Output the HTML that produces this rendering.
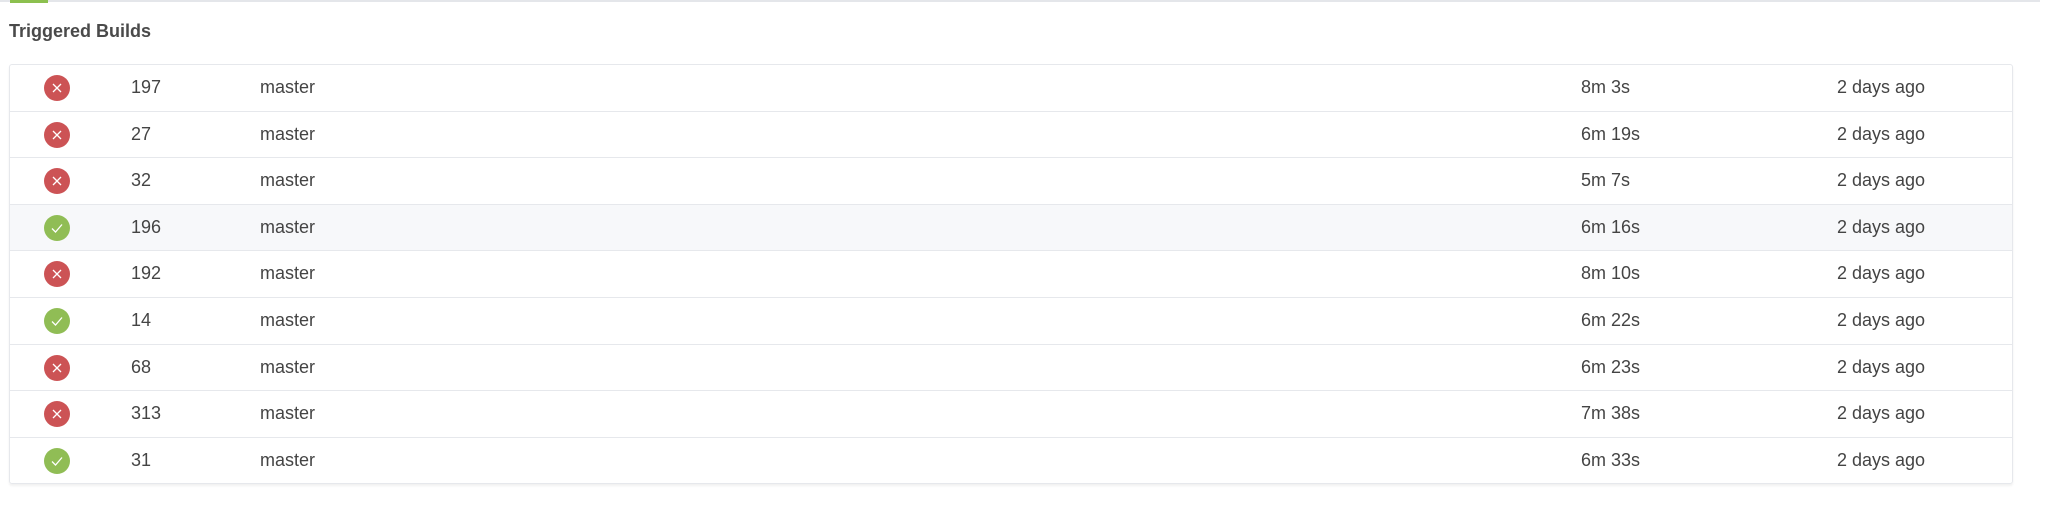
<!DOCTYPE html>
<html><head><style>
body{margin:0;width:2048px;height:506px;background:#fff;font-family:"Liberation Sans",sans-serif;position:relative;overflow:hidden}
.topline{position:absolute;left:0;top:0;width:2040px;height:2px;background:#e4e6ea}
.green{position:absolute;left:10px;top:0;width:38px;height:3px;background:#8cc04f}
h1{position:absolute;left:9px;top:21px;margin:0;font-size:18px;font-weight:bold;color:#4a4a4a}
.tbl{position:absolute;left:9px;top:64px;width:2002px;border:1px solid #e6e8ec;border-radius:3px;box-shadow:0 2px 2px rgba(0,0,0,.06)}
.r{position:relative;height:45.6px;border-top:1px solid #e6e8ec;font-size:18px;color:#444}
.r:first-child{border-top:none}
.r.h{background:#f7f8fa}
.r span{position:absolute;top:12px}
.ic{position:absolute;left:34px;top:10px;width:26px;height:26px;border-radius:50%}
.f{background:#cc5355}.s{background:#90bd55}
</style></head><body>
<div class="topline"></div><div class="green"></div>
<h1>Triggered Builds</h1>
<div class="tbl">
<div class="r"><svg class="ic f" viewBox="0 0 26 26"><path d="M9 9L17 17M17 9L9 17" stroke="#fff" stroke-width="1.3"/></svg><span style="left:121px">197</span><span style="left:250px">master</span><span style="left:1571px">8m 3s</span><span style="left:1827px">2 days ago</span></div>
<div class="r"><svg class="ic f" viewBox="0 0 26 26"><path d="M9 9L17 17M17 9L9 17" stroke="#fff" stroke-width="1.3"/></svg><span style="left:121px">27</span><span style="left:250px">master</span><span style="left:1571px">6m 19s</span><span style="left:1827px">2 days ago</span></div>
<div class="r"><svg class="ic f" viewBox="0 0 26 26"><path d="M9 9L17 17M17 9L9 17" stroke="#fff" stroke-width="1.3"/></svg><span style="left:121px">32</span><span style="left:250px">master</span><span style="left:1571px">5m 7s</span><span style="left:1827px">2 days ago</span></div>
<div class="r h"><svg class="ic s" viewBox="0 0 26 26"><path d="M8 13.5L11.5 17L18 9.5" stroke="#fff" stroke-width="1.3" fill="none"/></svg><span style="left:121px">196</span><span style="left:250px">master</span><span style="left:1571px">6m 16s</span><span style="left:1827px">2 days ago</span></div>
<div class="r"><svg class="ic f" viewBox="0 0 26 26"><path d="M9 9L17 17M17 9L9 17" stroke="#fff" stroke-width="1.3"/></svg><span style="left:121px">192</span><span style="left:250px">master</span><span style="left:1571px">8m 10s</span><span style="left:1827px">2 days ago</span></div>
<div class="r"><svg class="ic s" viewBox="0 0 26 26"><path d="M8 13.5L11.5 17L18 9.5" stroke="#fff" stroke-width="1.3" fill="none"/></svg><span style="left:121px">14</span><span style="left:250px">master</span><span style="left:1571px">6m 22s</span><span style="left:1827px">2 days ago</span></div>
<div class="r"><svg class="ic f" viewBox="0 0 26 26"><path d="M9 9L17 17M17 9L9 17" stroke="#fff" stroke-width="1.3"/></svg><span style="left:121px">68</span><span style="left:250px">master</span><span style="left:1571px">6m 23s</span><span style="left:1827px">2 days ago</span></div>
<div class="r"><svg class="ic f" viewBox="0 0 26 26"><path d="M9 9L17 17M17 9L9 17" stroke="#fff" stroke-width="1.3"/></svg><span style="left:121px">313</span><span style="left:250px">master</span><span style="left:1571px">7m 38s</span><span style="left:1827px">2 days ago</span></div>
<div class="r"><svg class="ic s" viewBox="0 0 26 26"><path d="M8 13.5L11.5 17L18 9.5" stroke="#fff" stroke-width="1.3" fill="none"/></svg><span style="left:121px">31</span><span style="left:250px">master</span><span style="left:1571px">6m 33s</span><span style="left:1827px">2 days ago</span></div>
</div>
</body></html>
